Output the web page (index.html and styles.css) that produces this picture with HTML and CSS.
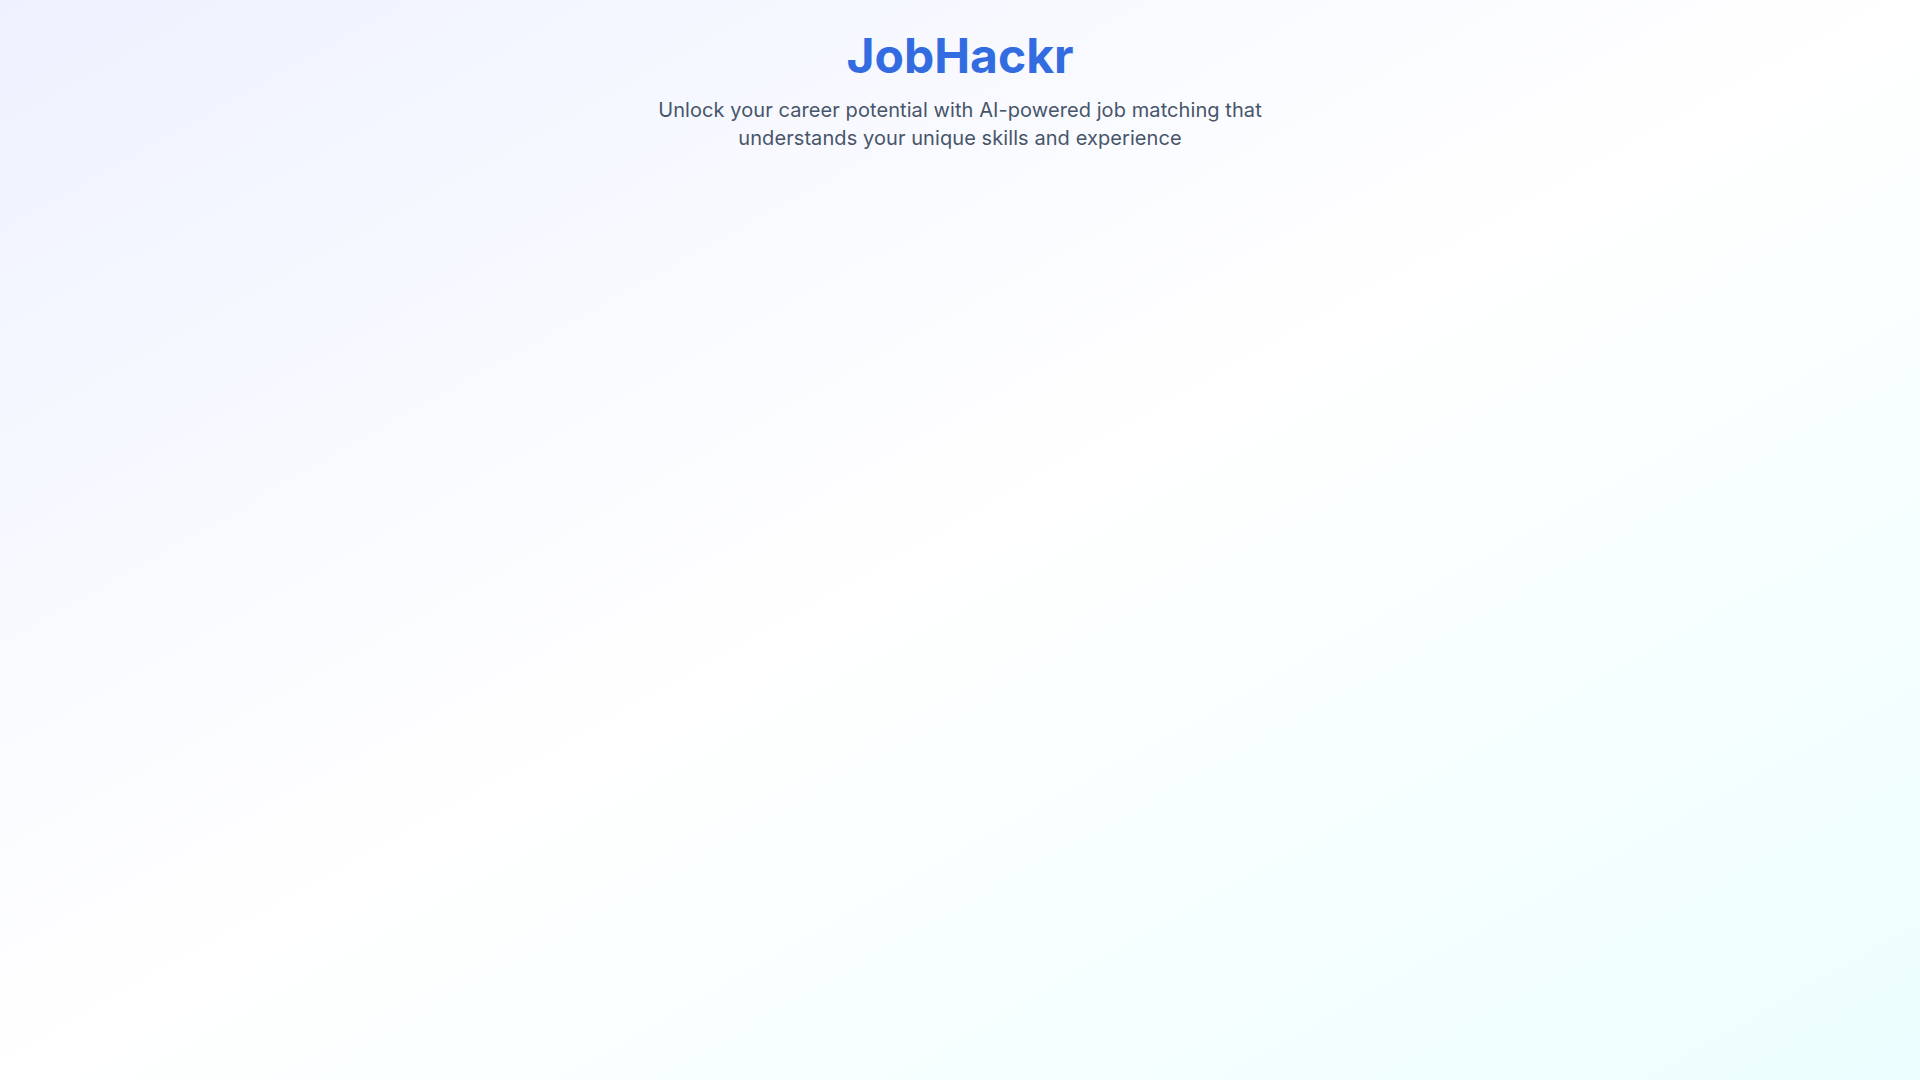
FILE: index.html
```html
<!DOCTYPE html>
<html lang="en">
<head>
<meta charset="utf-8">
<title>JobHackr</title>
<link rel="stylesheet" href="styles.css">
</head>
<body>
<main class="page">
  <header class="hero">
    <h1 class="hero-title">JobHackr</h1>
    <p class="hero-subtitle">Unlock your career potential with AI-powered job matching that understands your unique skills and experience</p>
  </header>
</main>
</body>
</html>
```
FILE: styles.css
```css
* { box-sizing: border-box; }
html, body { margin: 0; padding: 0; }
body {
  font-family: Inter, "Noto Sans", "Liberation Sans", sans-serif;
  min-height: 100vh;
  background: linear-gradient(to bottom right, #eef2ff 0%, #ffffff 50%, #ecfeff 100%);
}
.page {
  min-height: 100vh;
  padding: 32px 16px;
}
.hero {
  display: flex;
  flex-direction: column;
  align-items: center;
  text-align: center;
}
.hero-title {
  margin: 0 0 16px;
  font-size: 48px;
  line-height: 1;
  font-weight: 700;
  color: #336ce0;
}
.hero-subtitle {
  margin: 0;
  max-width: 672px;
  font-size: 20px;
  line-height: 28px;
  letter-spacing: 0.08px;
  color: #475569;
}
```
